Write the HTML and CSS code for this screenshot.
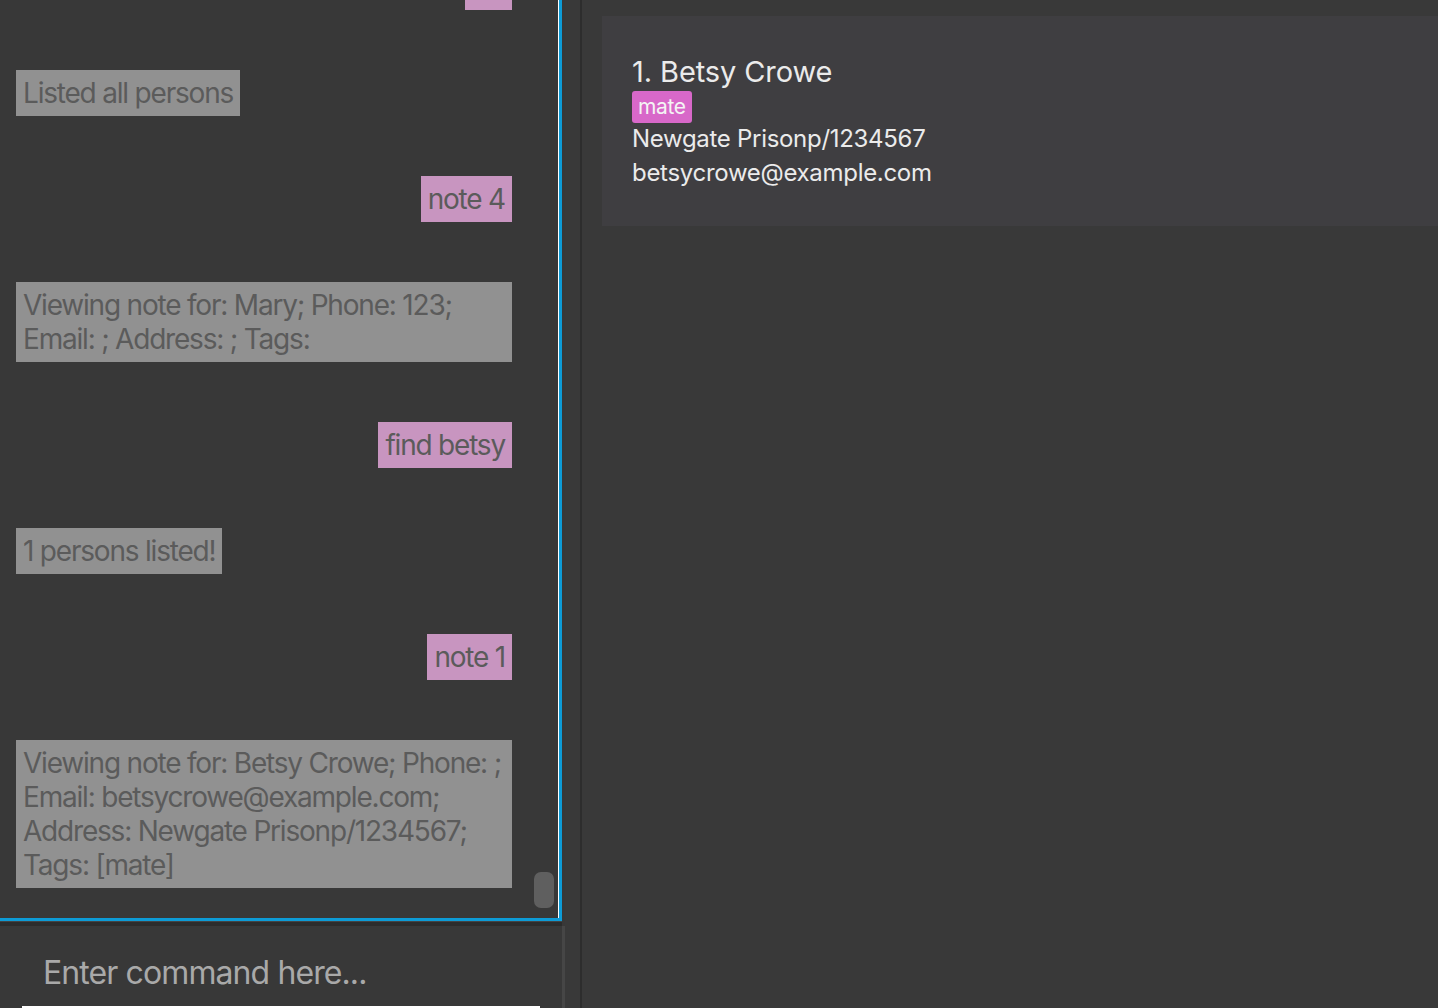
FILE: index.html
```html
<!DOCTYPE html>
<html>
<head>
<meta charset="utf-8">
<link rel="stylesheet" href="styles.css">
</head>
<body>
<div class="app">
  <div class="left">
    <div class="chat">
      <div class="chat-inner">
        <div class="msg user">list</div>
        <div class="msg bot">Listed all persons</div>
        <div class="msg user">note 4</div>
        <div class="msg bot">Viewing note for: Mary; Phone: 123; Email: ; Address: ; Tags:</div>
        <div class="msg user">find betsy</div>
        <div class="msg bot">1 persons listed!</div>
        <div class="msg user">note 1</div>
        <div class="msg bot">Viewing note for: Betsy Crowe; Phone: ; Email: betsycrowe@example.com; Address: Newgate Prisonp/1234567; Tags: [mate]</div>
      </div>
      <div class="thumb"></div>
    </div>
    <div class="sep"></div>
    <div class="input-area">
      <div class="input">Enter command here...</div>
    </div>
  </div>
  <div class="vdiv"></div>
  <div class="right">
    <div class="card">
      <div class="name">1. Betsy Crowe</div>
      <div class="tags"><span class="tag">mate</span></div>
      <div class="line">Newgate Prisonp/1234567</div>
      <div class="line">betsycrowe@example.com</div>
    </div>
  </div>
</div>
</body>
</html>
```

FILE: styles.css
```css
html, body {
  margin: 0;
  padding: 0;
  background: #383838;
  font-family: Inter, "Noto Sans", sans-serif;
}
.app {
  display: flex;
  width: 1438px;
  height: 1008px;
  overflow: hidden;
}
.left {
  width: 565px;
  display: flex;
  flex-direction: column;
  flex: none;
}
.chat {
  position: relative;
  width: 559px;
  height: 918px;
  border-right: 3px solid #0d9bd6;
  border-bottom: 3px solid #0d9bd6;
  flex: none;
  overflow: hidden;
  background: #383838;
}
.chat-inner {
  height: 100%;
  box-sizing: border-box;
  border-right: 1px solid #ffffff;
  display: flex;
  flex-direction: column;
  justify-content: flex-end;
  gap: 60px;
  padding: 0 46px 30px 16px;
}
.msg {
  flex: none;
  font-size: 28px;
  line-height: 34px;
  letter-spacing: -1.2px;
  padding: 6px 7px;
  color: #5b5b5b;
  max-width: 100%;
  box-sizing: border-box;
}
.msg.user {
  align-self: flex-end;
  background: #c895c0;
}
.msg.bot {
  align-self: flex-start;
  background: #919191;
}
.thumb {
  position: absolute;
  left: 534px;
  top: 872px;
  width: 20px;
  height: 36px;
  border-radius: 7px;
  background: #5f5f5f;
}
.sep {
  width: 562px;
  height: 4px;
  background: #2c2c2c;
  border-top: 1px solid #444;
  flex: none;
}
.input-area {
  flex: 1;
  border-right: 3px solid #464646;
  padding: 0 22px 0 22px;
  display: flex;
  flex-direction: column;
  justify-content: flex-end;
}
.input {
  font-size: 32px;
  letter-spacing: -0.9px;
  color: #a9a9a9;
  line-height: 40px;
  padding: 0 0 13px 21px;
  border-bottom: 2px solid #ffffff;
}
.vdiv {
  width: 15px;
  flex: none;
  background: #393939;
  border-right: 2px solid #2d2d2d;
}
.right {
  flex: 1;
  padding: 16px 0 0 20px;
  background: #393939;
}
.card {
  height: 210px;
  box-sizing: border-box;
  background: #3f3e41;
  padding: 36px 30px 0 30px;
  color: #ebebeb;
}
.name {
  font-size: 29px;
  line-height: 40px;
  letter-spacing: -0.1px;
}
.tags {
  display: flex;
  height: 32px;
  margin-top: -1px;
  margin-bottom: -1px;
}
.tag {
  background: #d868c9;
  color: #f4f4f4;
  font-size: 21px;
  line-height: 32px;
  padding: 0 6px;
  border-radius: 3px;
  letter-spacing: -0.4px;
}
.line {
  font-size: 24px;
  line-height: 34px;
  letter-spacing: -0.3px;
}
```
